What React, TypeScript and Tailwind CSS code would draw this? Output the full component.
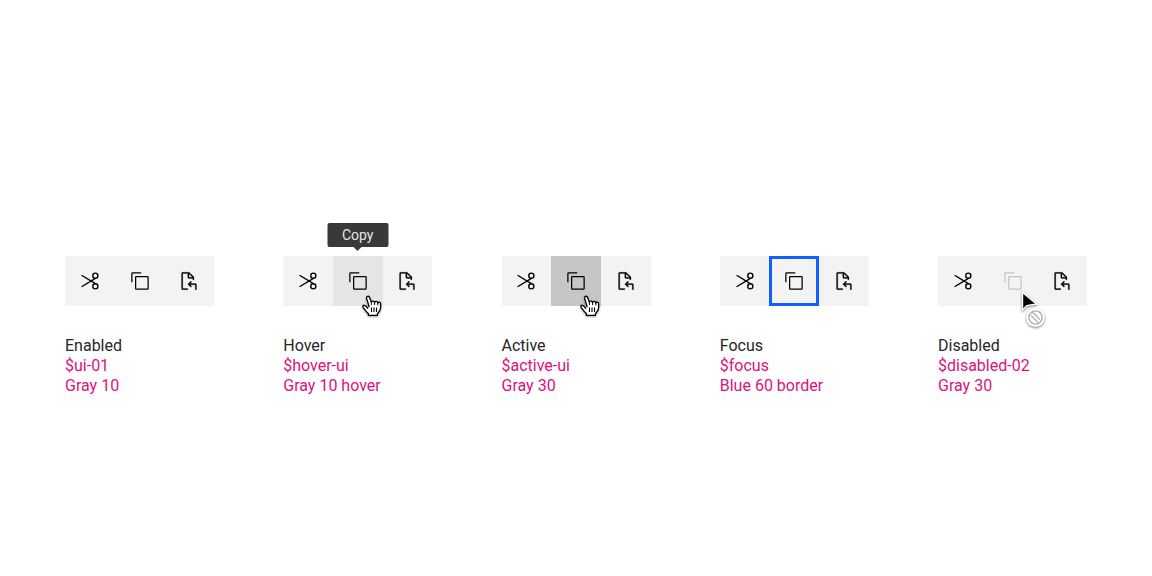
import React from "react";

type CopyState = "enabled" | "hover" | "active" | "focus" | "disabled";

const states: { name: string; token: string; detail: string; copy: CopyState }[] = [
  { name: "Enabled", token: "$ui-01", detail: "Gray 10", copy: "enabled" },
  { name: "Hover", token: "$hover-ui", detail: "Gray 10 hover", copy: "hover" },
  { name: "Active", token: "$active-ui", detail: "Gray 30", copy: "active" },
  { name: "Focus", token: "$focus", detail: "Blue 60 border", copy: "focus" },
  { name: "Disabled", token: "$disabled-02", detail: "Gray 30", copy: "disabled" },
];

const copyStyles: Record<CopyState, string> = {
  enabled: "text-black",
  hover: "bg-[#e5e5e5] text-black",
  active: "bg-[#c6c6c6] text-black",
  focus: "border-[3px] border-[#0f62fe] text-black",
  disabled: "text-[#c6c6c6]",
};

function CutIcon() {
  return (
    <svg viewBox="0 0 32 32" className="size-5" fill="none" stroke="currentColor" strokeWidth="2.2" aria-hidden="true">
      <circle cx="24.5" cy="7.5" r="4.1" />
      <circle cx="24.5" cy="24.5" r="4.1" />
      <path d="M2.5 6.8 24 19.8M2.5 25.2 24 12.2" />
    </svg>
  );
}

function CopyIcon() {
  return (
    <svg viewBox="0 0 32 32" className="size-5" fill="currentColor" aria-hidden="true">
      <path d="M28 10V28H10V10H28m0-2H10a2 2 0 0 0-2 2V28a2 2 0 0 0 2 2H28a2 2 0 0 0 2-2V10a2 2 0 0 0-2-2Z" />
      <path d="M4 18H2V4A2 2 0 0 1 4 2H18V4H4Z" />
    </svg>
  );
}

function PasteIcon() {
  return (
    <svg viewBox="0 0 32 32" className="size-5" fill="currentColor" stroke="currentColor" strokeWidth="0.4" aria-hidden="true">
      <path d="M26 20H17.83l2.58-2.59L19 16l-5 5 5 5 1.41-1.41L17.83 22H26v8h2V22A2 2 0 0 0 26 20Z" />
      <path d="M23.71 9.29l-7-7A1 1 0 0 0 16 2H6A2 2 0 0 0 4 4V28a2 2 0 0 0 2 2h8V28H6V4h8v6a2 2 0 0 0 2 2h6v2h2V10A1 1 0 0 0 23.71 9.29ZM16 4.41 21.59 10H16Z" />
    </svg>
  );
}

function HandCursor() {
  return (
    <svg viewBox="0 0 20 22" className="pointer-events-none absolute top-[39px] left-[29px] z-10 h-[22px] w-5 drop-shadow-[0_1px_1px_rgba(0,0,0,0.35)]" aria-hidden="true">
      <path
        d="M6 13.6C5 12 3.8 10.6 2.4 10.3 .9 10 .5 11.4 1.3 12.6 2.8 14.6 4.6 17.4 6.4 18.6V20.4H15.4V18.8C16.6 17.4 18.4 15.8 18.6 13V8.8C18.6 7 16.3 6.6 15.8 8.2 15.6 6.2 13.2 5.8 12.6 7.6 12.2 5.8 9.8 5.6 9.4 7.2L7.6 2.4C6.8.4 4 1.2 4.6 3.4L7.2 12"
        fill="white"
        stroke="black"
        strokeWidth="1.3"
        strokeLinejoin="round"
      />
      <path d="M9.4 7v3M12.6 7.4v2.6M15.8 8v2.4" stroke="black" strokeWidth="1" />
      <path d="M9.5 12.5v4.5M12 12.5v4.5M14.5 12.5v4.5" stroke="black" strokeWidth="1.1" />
    </svg>
  );
}

function BlockedCursor() {
  return (
    <svg viewBox="0 0 28 38" className="pointer-events-none absolute top-[35px] left-[32px] z-10 h-[38px] w-7 drop-shadow-[0_1px_1px_rgba(0,0,0,0.5)]" aria-hidden="true">
      <path d="M2.5 1.5V19L6.8 14.6 16.5 13Z" fill="black" stroke="white" strokeWidth="1.4" />
      <circle cx="15.5" cy="26.5" r="9.5" fill="white" />
      <circle cx="15.5" cy="26.5" r="6.6" fill="white" stroke="#adadad" strokeWidth="1.4" />
      <path d="m12.4 21 7.6 7.6M11 24.4l7.2 7.2" stroke="#adadad" strokeWidth="1.3" />
    </svg>
  );
}

function Toolbar({ copy }: { copy: CopyState }) {
  return (
    <div role="toolbar" aria-label="Edit" className="flex h-[50px] bg-[#f3f3f3] text-black">
      <button type="button" aria-label="Cut" className="flex flex-1 items-center justify-center">
        <CutIcon />
      </button>
      <div className="relative flex flex-1">
        <button
          type="button"
          aria-label="Copy"
          disabled={copy === "disabled"}
          className={`flex flex-1 items-center justify-center ${copyStyles[copy]}`}
        >
          <CopyIcon />
        </button>
        {copy === "hover" && (
          <div role="tooltip" className="absolute bottom-[59px] left-1/2 flex h-6 w-[61px] -translate-x-1/2 items-center justify-center rounded-xs bg-[#393939] text-sm text-[#e5e5e5]">
            Copy
            <svg viewBox="0 0 8 4" className="absolute top-full h-1 w-2" aria-hidden="true">
              <path d="M0 0h8L4 4Z" fill="#393939" />
            </svg>
          </div>
        )}
        {(copy === "hover" || copy === "active") && <HandCursor />}
        {copy === "disabled" && <BlockedCursor />}
      </div>
      <button type="button" aria-label="Paste" className="flex flex-1 items-center justify-center">
        <PasteIcon />
      </button>
    </div>
  );
}

export default function App() {
  return (
    <main className="flex min-h-screen justify-between bg-white px-[65px] pt-[256px] font-['Roboto',sans-serif]">
      {states.map((state) => (
        <section key={state.name} className="w-[149px]">
          <Toolbar copy={state.copy} />
          <h2 className="mt-[30px] text-base leading-5 text-[#262626]">{state.name}</h2>
          <p className="text-base leading-5 text-[#e0107c]">{state.token}</p>
          <p className="text-base leading-5 text-[#e0107c]">{state.detail}</p>
        </section>
      ))}
    </main>
  );
}
